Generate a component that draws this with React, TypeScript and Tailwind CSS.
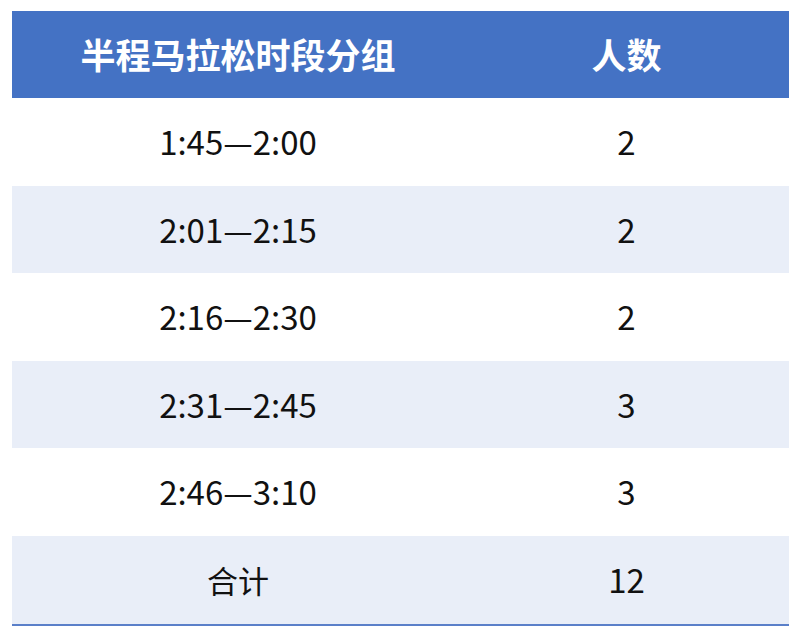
const rows = [
  { range: "1:45—2:00", count: "2" },
  { range: "2:01—2:15", count: "2" },
  { range: "2:16—2:30", count: "2" },
  { range: "2:31—2:45", count: "3" },
  { range: "2:46—3:10", count: "3" },
];

export default function App() {
  return (
    <div
      className="min-h-[637px] w-[800px] bg-white pt-[11px] pl-[12px]"
      style={{ fontFamily: '"Noto Sans CJK SC", "Noto Sans", sans-serif' }}
    >
      <div className="w-[777px]">
        <div className="grid h-[87px] grid-cols-[452px_1fr] items-center bg-[#4472c4] text-[35px] font-bold text-white">
          <div className="text-center">半程马拉松时段分组</div>
          <div className="text-center">人数</div>
        </div>
        {rows.map((row, i) => (
          <div
            key={row.range}
            className={
              "grid h-[87.6px] grid-cols-[452px_1fr] items-center text-[33px] text-[#111111] " +
              (i % 2 === 1 ? "bg-[#e9eef8]" : "bg-white")
            }
          >
            <div className="text-center">{row.range}</div>
            <div className="text-center">{row.count}</div>
          </div>
        ))}
        <div className="grid h-[87.6px] grid-cols-[452px_1fr] items-center bg-[#e9eef8] text-[#111111]">
          <div className="text-center text-[31px]">合计</div>
          <div className="text-center text-[33px]">12</div>
        </div>
        <div className="h-[2px] bg-[#5a7fc9]" />
      </div>
    </div>
  );
}
